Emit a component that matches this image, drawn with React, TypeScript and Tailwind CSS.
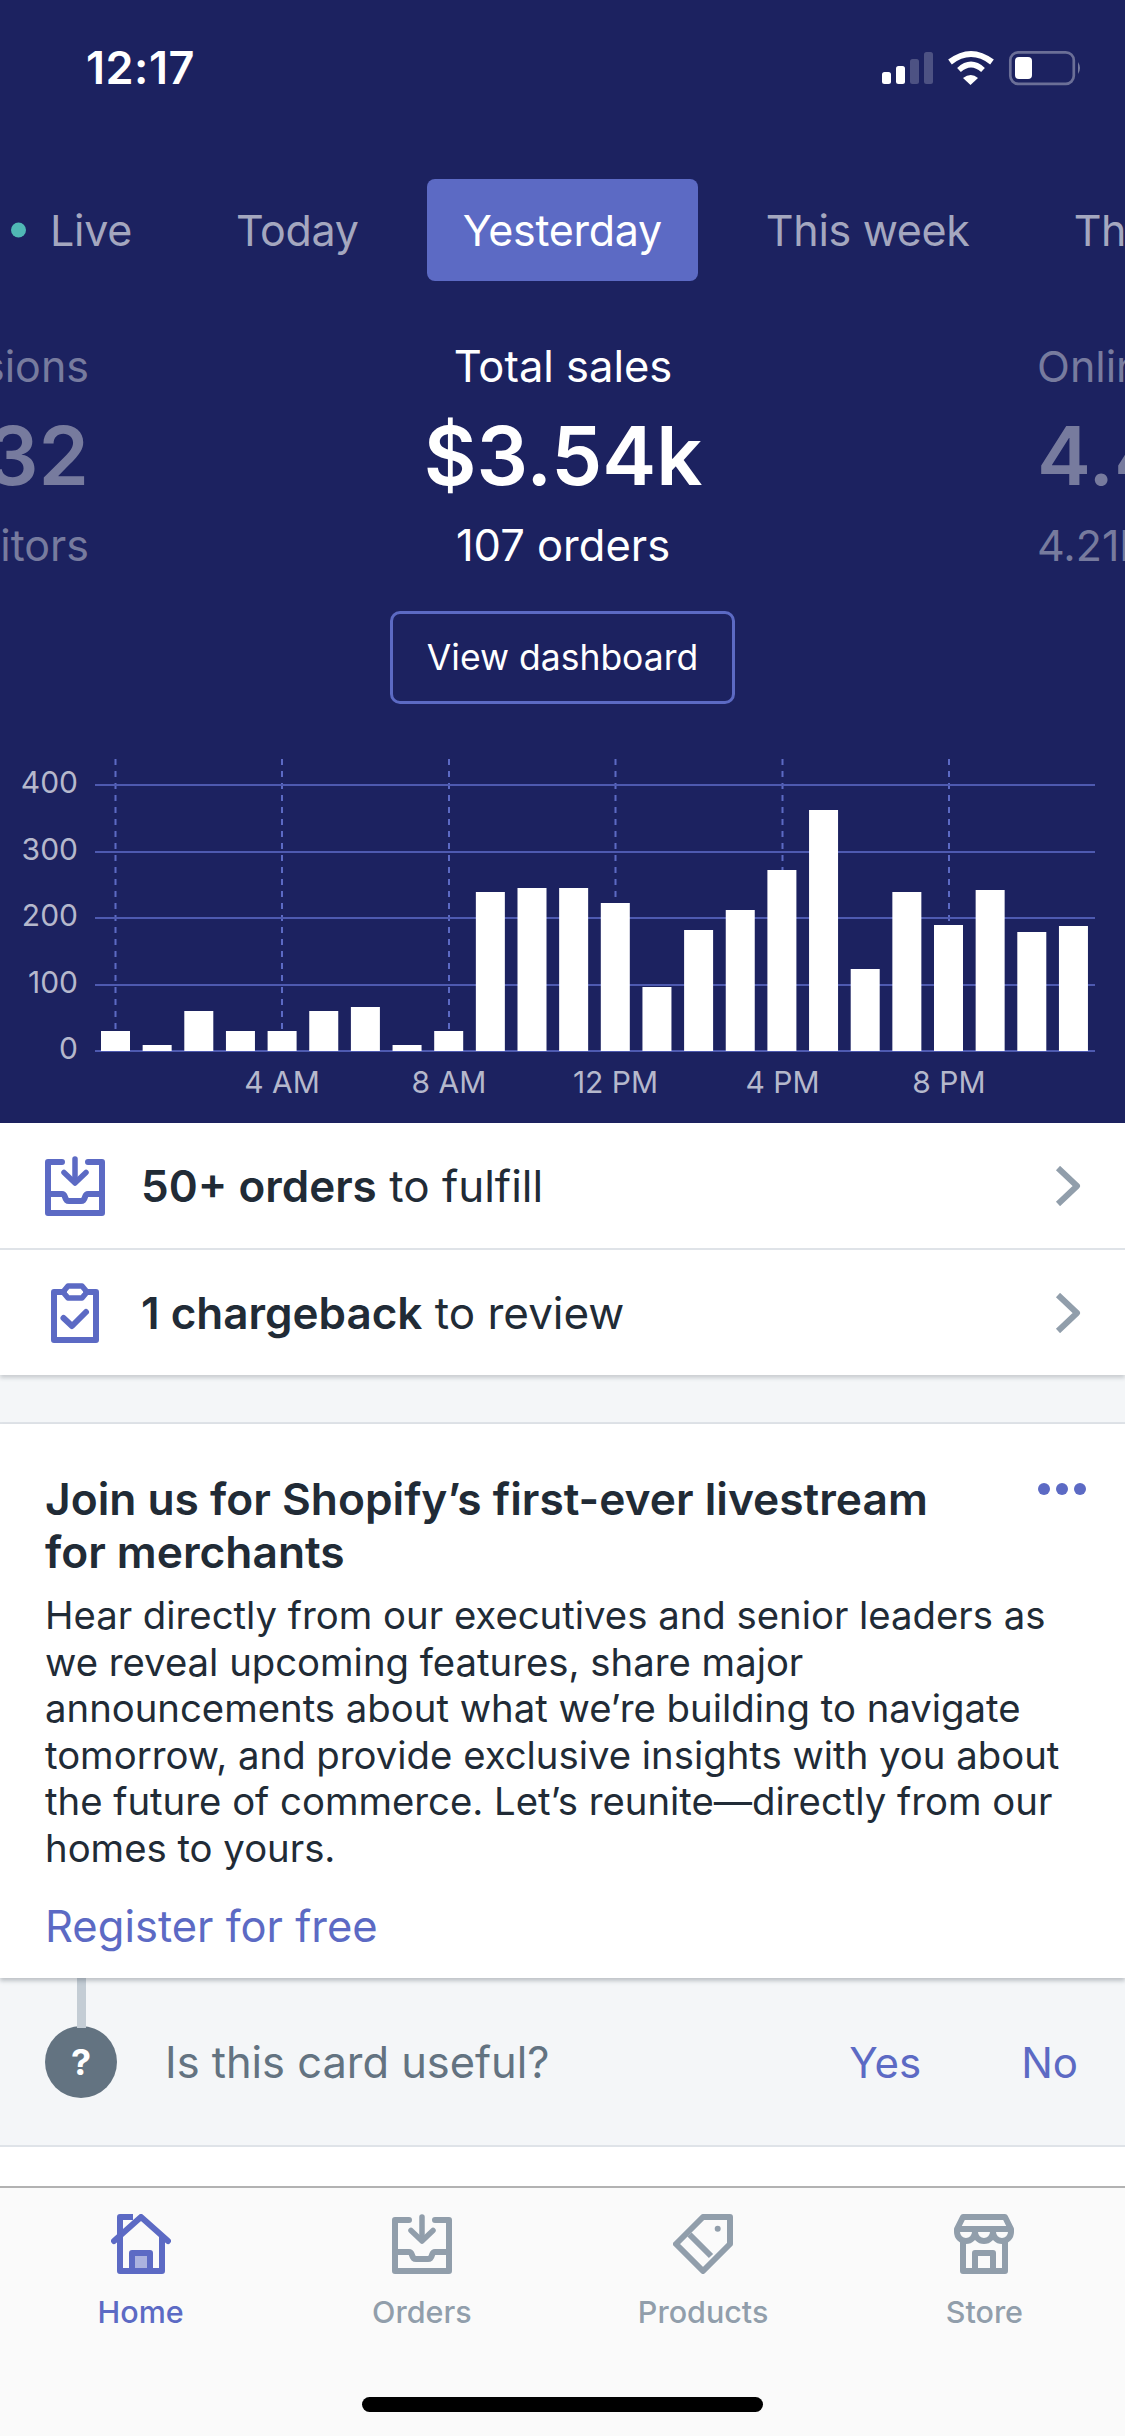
const font = "font-['Inter',sans-serif]";

const bars = [1031,1045,1011,1031,1031,1011,1007,1045,1031,892,888,888,903,987,930,910,870,810,969,892,925,890,932,926];
const gridY = [785,852,918,985,1051];
const dashX = [115.5,282,449,615.5,782.5,949];

function Inbox({ className }: { className: string }) {
  return (
    <svg viewBox="0 0 60 60" className={className} fill="none" stroke="currentColor" strokeLinecap="round" strokeLinejoin="round">
      <path d="M17 6H3v51h54V6H43" strokeWidth="6" />
      <path d="M30 3v23" strokeWidth="5.5" />
      <path d="M19 16.5L30 27l11-10.5" strokeWidth="5.5" />
      <path d="M3 38h14q2 0 3 3 1 4 4 4h12q3 0 4-4 1-3 3-3h14" strokeWidth="6" />
    </svg>
  );
}

function Clipboard({ className }: { className: string }) {
  return (
    <svg viewBox="0 0 48 60" className={className} fill="none" stroke="currentColor" strokeLinejoin="round" strokeLinecap="round">
      <path d="M13 9H3v48h42V9H35" strokeWidth="6" />
      <path d="M17 3h14l5 6-5 6H17l-5-6z" strokeWidth="5.5" />
      <path d="M12.5 35l8.5 8 14-14" strokeWidth="6" />
    </svg>
  );
}

function Home({ className }: { className: string }) {
  return (
    <svg viewBox="0 0 60 60" className={className} fill="none" stroke="currentColor" strokeLinejoin="round">
      <path d="M9 22v35h42V22" strokeWidth="6" />
      <path d="M3 27L30 3l27 24" strokeWidth="6" strokeLinecap="round" />
      <path d="M9 22V3h13" strokeWidth="6" />
      <path d="M21 57V39h18v18" strokeWidth="6" />
      <rect x="24" y="42" width="12" height="12" fill="currentColor" stroke="none" opacity="0.5" />
    </svg>
  );
}

function Tag({ className }: { className: string }) {
  return (
    <svg viewBox="0 0 60 60" className={className} fill="none" stroke="currentColor" strokeLinejoin="round">
      <path d="M30 3h27v27L30 57 3 30z" strokeWidth="6" />
      <path d="M16.5 20.5L38 42" strokeWidth="6" />
      <circle cx="44.7" cy="14.7" r="3" fill="currentColor" stroke="none" />
    </svg>
  );
}

function Store({ className }: { className: string }) {
  return (
    <svg viewBox="0 0 60 60" className={className} fill="none" stroke="currentColor" strokeLinejoin="round">
      <path d="M3 15L9 3h42l6 12v3a9 9 0 0 1-18 0 9 9 0 0 1-18 0 9 9 0 0 1-18 0z" strokeWidth="6" />
      <path d="M3 15h54" strokeWidth="6" />
      <path d="M9 27v30h42V27" strokeWidth="6" />
      <path d="M21 57V39h18v18" strokeWidth="6" />
    </svg>
  );
}

function Chevron() {
  return (
    <svg viewBox="0 0 26 40" className="w-[26px] h-[40px] text-[#919eab]" fill="none">
      <path d="M3 2l19 18L3 38" stroke="currentColor" strokeWidth="6" strokeLinejoin="round" />
    </svg>
  );
}

function StatusIcons() {
  return (
    <svg viewBox="0 0 204 36" className="w-[204px] h-[36px]" fill="none">
      <rect x="2" y="22" width="9" height="12" rx="2.5" fill="#fff" />
      <rect x="16" y="16" width="9" height="18" rx="2.5" fill="#fff" />
      <rect x="30" y="9" width="9" height="25" rx="2.5" fill="#fff" opacity="0.22" />
      <rect x="44" y="2" width="9" height="32" rx="2.5" fill="#fff" opacity="0.22" />
      <path d="M70 12Q91-4 112 12" stroke="#fff" strokeWidth="6" />
      <path d="M79 20Q91 9 103 20" stroke="#fff" strokeWidth="5.5" />
      <path d="M83 28Q91 22 98 28L90.5 35z" fill="#fff" />
      <rect x="130.3" y="2.3" width="63.5" height="31.5" rx="8" stroke="#fff" strokeOpacity="0.35" strokeWidth="2.7" />
      <rect x="135" y="7" width="17" height="22" rx="4" fill="#fff" />
      <path d="M198 12q4 6 0 12z" fill="#fff" fillOpacity="0.4" />
    </svg>
  );
}

function Chart() {
  return (
    <svg viewBox="0 759 1125 340" className="w-full h-[340px] block">
      {dashX.map((x) => (
        <line key={x} x1={x} x2={x} y1={759} y2={1051} stroke="#5c6ac4" strokeWidth="2" strokeDasharray="6 6" />
      ))}
      {gridY.map((y) => (
        <line key={y} x1={95} x2={1095} y1={y} y2={y} stroke="#4e5ab0" strokeWidth="2" />
      ))}
      {bars.map((top, i) => (
        <rect key={i} x={101 + i * 41.65} y={top} width={29} height={1051 - top} fill="#fff" />
      ))}
      {[400,300,200,100,0].map((v, i) => (
        <text key={v} x={78} y={gridY[i] + 8} textAnchor="end" fontSize="30" fill="#b5b8cc" fontFamily="Inter, sans-serif">{v}</text>
      ))}
      {[["4 AM",282],["8 AM",449],["12 PM",615.5],["4 PM",782.5],["8 PM",949]].map(([t, x]) => (
        <text key={t as string} x={x as number} y={1093} textAnchor="middle" fontSize="30" fill="#b5b8cc" fontFamily="Inter, sans-serif">{t}</text>
      ))}
    </svg>
  );
}

function Task({ icon, bold, rest, className }: { icon: React.ReactNode; bold: string; rest: string; className: string }) {
  return (
    <div className={`flex items-center pl-[45px] pr-[44px] ${className}`}>
      <div className="w-[98px] shrink-0">{icon}</div>
      <div className="flex-1 text-[44px] text-[#212b36] -ml-[2px]"><span className="font-semibold">{bold}</span> {rest}</div>
      <Chevron />
    </div>
  );
}

function NavItem({ icon, label, active }: { icon: React.ReactNode; label: string; active?: boolean }) {
  return (
    <div className={`flex flex-col items-center gap-[20px] ${active ? "text-[#5c6ac4]" : "text-[#919eab]"}`}>
      {icon}
      <span className="text-[30.5px] leading-[36px] font-medium">{label}</span>
    </div>
  );
}

export default function App() {
  return (
    <div className={`w-[1125px] h-[2436px] overflow-hidden flex flex-col bg-white ${font}`}>
      <div className="h-[1123px] shrink-0 bg-[#1c2260] flex flex-col">
        <div className="h-[179px] shrink-0 flex items-start justify-between pt-[50px] pl-[86px] pr-[41px]">
          <span className="text-[45px] leading-[36px] font-semibold text-white tracking-[0.5px]">12:17</span>
          <StatusIcons />
        </div>
        <div className="flex items-center gap-8 ml-[14px] h-[102px] shrink-0 text-[43px] tracking-[-0.3px] text-[#a4a7bf] whitespace-nowrap">
          <div className="relative px-9">
            <span className="absolute left-[-3px] top-1/2 -translate-y-1/2 w-[15px] h-[15px] rounded-full bg-[#50b8b5]" />
            Live
          </div>
          <div className="px-9">Today</div>
          <div className="px-9 h-[102px] flex items-center rounded-[8px] bg-[#5c6ac4] text-white">Yesterday</div>
          <div className="px-9">This week</div>
          <div className="px-9">This month</div>
        </div>
        <div className="mt-[60px] flex shrink-0">
          <div className="w-[89px] overflow-hidden flex flex-col items-end text-[#777b9e] text-[43px] whitespace-nowrap">
            <div className="leading-[50px]">Sessions</div>
            <div className="mt-[20px] leading-[90px] text-[81px] font-semibold">632</div>
            <div className="mt-[19px] leading-[50px]">visitors</div>
          </div>
          <div className="flex-1 flex flex-col items-center text-white text-[43.5px]">
            <div className="leading-[50px]">Total sales</div>
            <div className="mt-[20px] leading-[90px] text-[81px] font-semibold">$3.54k</div>
            <div className="mt-[19px] leading-[50px]">107 orders</div>
          </div>
          <div className="w-[88px] overflow-hidden flex flex-col items-start text-[#777b9e] text-[43px] whitespace-nowrap">
            <div className="leading-[50px]">Online</div>
            <div className="mt-[20px] leading-[90px] text-[81px] font-semibold">4.4k</div>
            <div className="mt-[19px] leading-[50px]">4.21k</div>
          </div>
        </div>
        <div className="mt-[41px] flex justify-center">
          <div className="w-[345px] h-[93px] flex items-center justify-center border-[3px] border-[#5c6ac4] rounded-[10px] text-white text-[35.5px]">View dashboard</div>
        </div>
        <div className="mt-[55px]"><Chart /></div>
      </div>

      <div className="bg-white shadow-[0_3px_4px_rgba(33,43,54,0.2)] relative">
        <Task className="h-[127px] border-b-2 border-[#dfe3e8]" icon={<Inbox className="w-[60px] h-[60px] text-[#5c6ac4]" />} bold="50+ orders" rest="to fulfill" />
        <Task className="h-[125px]" icon={<Clipboard className="ml-[6px] w-[48px] h-[60px] text-[#5c6ac4]" />} bold="1 chargeback" rest="to review" />
      </div>

      <div className="h-[49px] shrink-0 bg-[#f4f6f8] border-b-2 border-[#dfe3e8]" />

      <div className="h-[554px] shrink-0 bg-white relative z-10 shadow-[0_3px_4px_rgba(33,43,54,0.25)] px-[45px] pt-[49px]">
        <button className="absolute right-[39px] top-[59px] flex gap-[6px]">
          <span className="w-[12px] h-[12px] rounded-full bg-[#5c6ac4]" />
          <span className="w-[12px] h-[12px] rounded-full bg-[#5c6ac4]" />
          <span className="w-[12px] h-[12px] rounded-full bg-[#5c6ac4]" />
        </button>
        <h2 className="text-[44.3px] leading-[53px] font-semibold text-[#212b36]">Join us for Shopify’s first-ever livestream<br />for merchants</h2>
        <p className="text-[38.3px] leading-[46.6px] text-[#212b36] mt-[13px] whitespace-nowrap">
          Hear directly from our executives and senior leaders as<br />
          we reveal upcoming features, share major<br />
          announcements about what we’re building to navigate<br />
          tomorrow, and provide exclusive insights with you about<br />
          the future of commerce. Let’s reunite—directly from our<br />
          homes to yours.
        </p>
        <div className="text-[43.5px] leading-[50px] text-[#5c6ac4] mt-[29px]">Register for free</div>
      </div>

      <div className="h-[169px] shrink-0 bg-[#f4f6f8] border-b-2 border-[#dfe3e8] relative flex items-center pl-[45px] pr-[47px]">
        <span className="absolute left-[77px] top-0 w-[9px] h-[50px] bg-[#c4cdd5]" />
        <div className="w-[72px] h-[72px] rounded-full bg-[#637381] text-white text-[36px] font-bold flex items-center justify-center">?</div>
        <div className="ml-[48px] flex-1 pt-[2px] text-[43.4px] text-[#637381]">Is this card useful?</div>
        <div className="pt-[2px] text-[42px] text-[#5c6ac4]">Yes</div>
        <div className="ml-[100px] pt-[2px] text-[42px] text-[#5c6ac4]">No</div>
      </div>

      <div className="h-[39px] shrink-0 bg-white" />

      <div className="flex-1 bg-[#fafafa] border-t-2 border-[#b2b2b2] relative pt-[26px]">
        <div className="grid grid-cols-4">
          <NavItem active icon={<Home className="w-[60px] h-[60px]" />} label="Home" />
          <NavItem icon={<Inbox className="w-[60px] h-[60px]" />} label="Orders" />
          <NavItem icon={<Tag className="w-[60px] h-[60px]" />} label="Products" />
          <NavItem icon={<Store className="w-[60px] h-[60px]" />} label="Store" />
        </div>
        <div className="absolute left-[362px] top-[209px] w-[401px] h-[15px] rounded-full bg-black" />
      </div>
    </div>
  );
}
